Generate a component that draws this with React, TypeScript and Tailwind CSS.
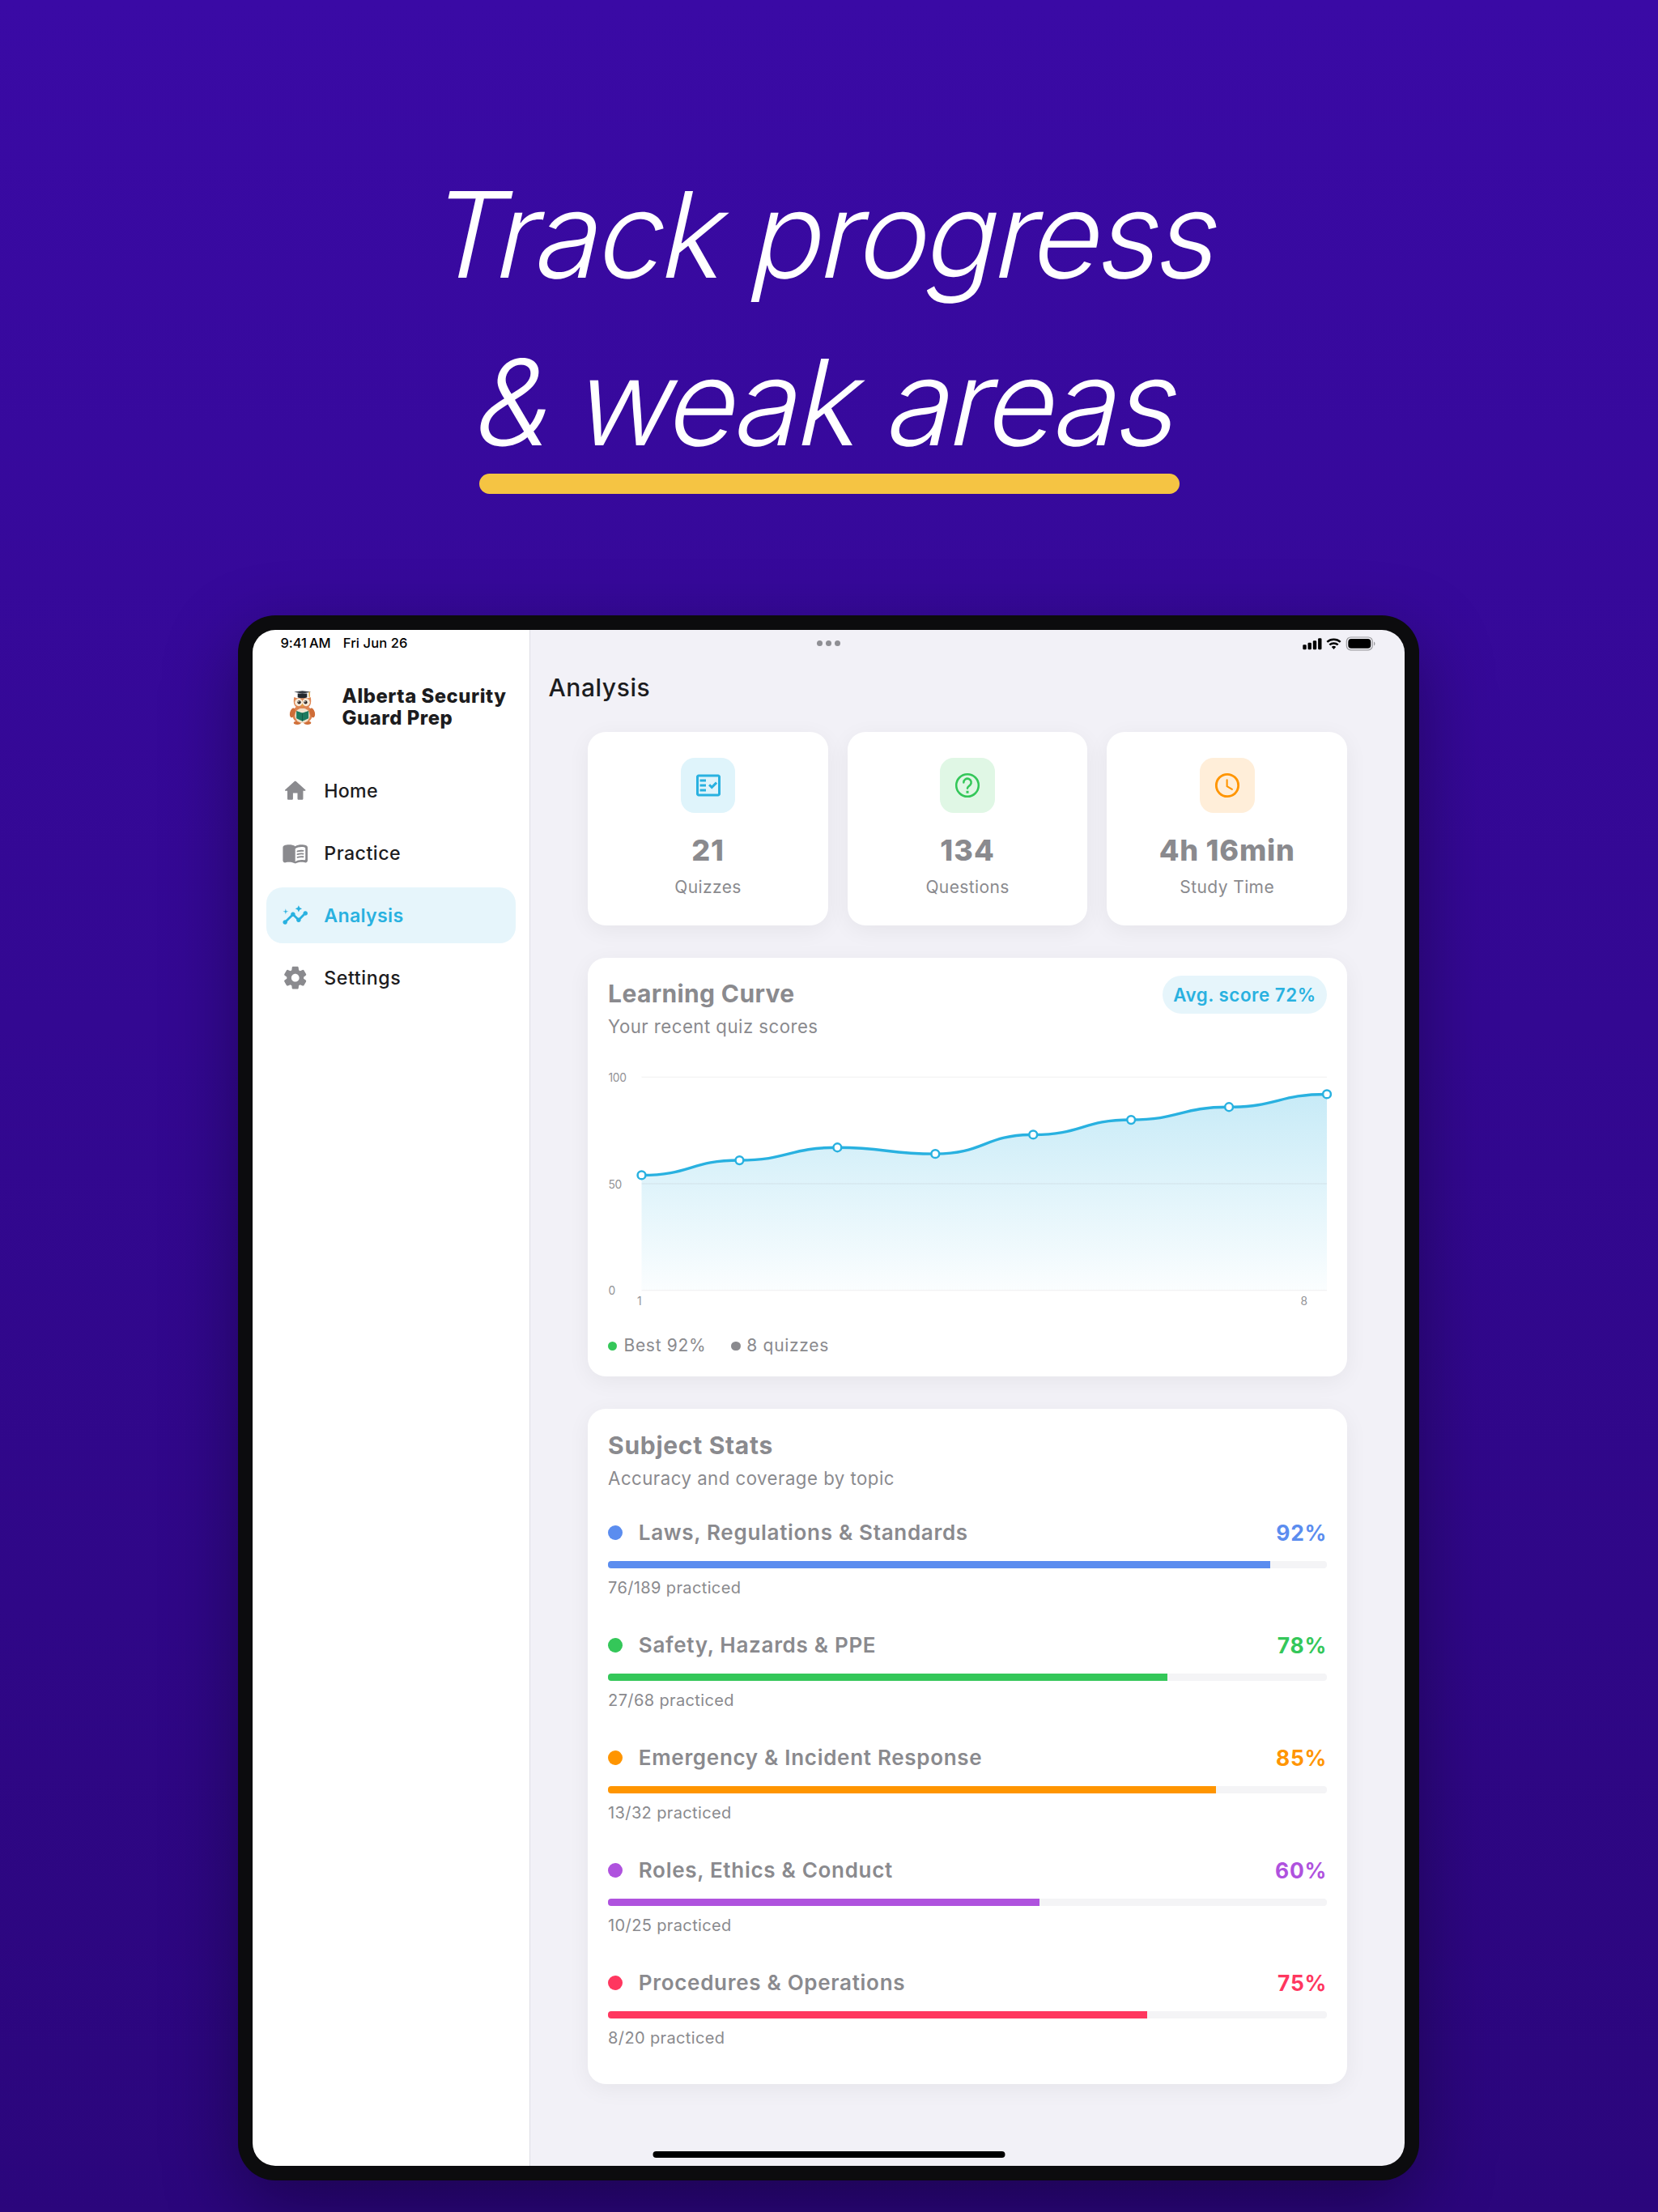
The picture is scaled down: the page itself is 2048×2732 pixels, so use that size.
import { MdInsights, MdOutlineFactCheck } from "react-icons/md";

const ROUNDED_HOME =
  "M10 19v-5h4v5c0 .55.45 1 1 1h3c.55 0 1-.45 1-1v-7h1.7c.46 0 .68-.57.33-.87L12.67 3.6c-.38-.34-.96-.34-1.34 0l-8.36 7.53c-.34.3-.13.87.33.87H5v7c0 .55.45 1 1 1h3c.55 0 1-.45 1-1z";
const ROUNDED_BOOK =
  "M17.5 4.5c-1.95 0-4.05.4-5.5 1.5-1.45-1.1-3.55-1.5-5.5-1.5-1.45 0-2.99.22-4.28.79C1.49 5.62 1 6.33 1 7.14v11.28c0 1.3 1.22 2.26 2.48 1.94.98-.25 2.02-.36 3.02-.36 1.56 0 3.22.26 4.56.92.6.3 1.28.3 1.87 0 1.34-.67 3-.92 4.56-.92 1 0 2.04.11 3.02.36 1.26.33 2.48-.63 2.48-1.94V7.14c0-.81-.49-1.52-1.22-1.85-1.28-.57-2.82-.79-4.27-.79zM21 17.23c0 .63-.58 1.09-1.2.98-.75-.14-1.53-.2-2.3-.2-1.7 0-4.15.65-5.5 1.5V8c1.35-.85 3.8-1.5 5.5-1.5.92 0 1.83.09 2.7.28.46.1.8.51.8.98v9.47z";
const ROUNDED_GEAR =
  "M19.5 12c0-.23-.01-.45-.03-.68l1.86-1.41c.4-.3.51-.86.26-1.3l-1.87-3.23c-.25-.44-.79-.62-1.25-.42l-2.15.91c-.37-.26-.76-.49-1.17-.68l-.29-2.31C14.8 2.38 14.37 2 13.87 2h-3.73c-.51 0-.94.38-1 .88l-.29 2.31c-.41.19-.8.42-1.17.68l-2.15-.91c-.46-.2-1-.02-1.25.42L2.41 8.62c-.25.44-.14.99.26 1.3l1.86 1.41C4.51 11.55 4.5 11.77 4.5 12s.01.45.03.68l-1.86 1.41c-.4.3-.51.86-.26 1.3l1.87 3.23c.25.44.79.62 1.25.42l2.15-.91c.37.26.76.49 1.17.68l.29 2.31c.06.5.49.88.99.88h3.73c.5 0 .93-.38.99-.88l.29-2.31c.41-.19.8-.42 1.17-.68l2.15.91c.46.2 1 .02 1.25-.42l1.87-3.23c.25-.44.14-.99-.26-1.3l-1.86-1.41c.03-.23.04-.45.04-.68zm-7.46 3.5c-1.93 0-3.5-1.57-3.5-3.5s1.57-3.5 3.5-3.5 3.5 1.57 3.5 3.5-1.57 3.5-3.5 3.5z";

function HomeIcon() {
  return (
    <svg viewBox="0 0 24 24" className="size-[33.4px] fill-[#8a8a8e]">
      <path d={ROUNDED_HOME} />
    </svg>
  );
}

function BookIcon() {
  return (
    <svg viewBox="0 0 24 24" className="size-[33.4px] fill-[#8a8a8e]">
      <path d={ROUNDED_BOOK} />
      <g fill="none" stroke="#8a8a8e" strokeWidth="1.3" strokeLinecap="round">
        <path d="M13.98 10.4c1.5-.48 3.4-.63 5.1-.43" />
        <path d="M13.98 13.05c1.5-.48 3.4-.63 5.1-.43" />
        <path d="M13.98 15.7c1.5-.48 3.4-.63 5.1-.43" />
      </g>
    </svg>
  );
}

function GearIcon() {
  return (
    <svg viewBox="0 0 24 24" className="size-[33.4px] fill-[#8a8a8e]">
      <path d={ROUNDED_GEAR} />
    </svg>
  );
}

function QuestionIcon() {
  return (
    <svg viewBox="0 0 24 24" className="size-[36px]" fill="none" stroke="#34c759" strokeWidth="1.7">
      <circle cx="12" cy="12" r="9.2" />
      <path d="M8.9 9.6a3.1 3.1 0 1 1 5.3 2.1c-1 1-2.2 1.5-2.2 2.7" strokeLinecap="round" />
      <path d="M11 16.5h2v2h-2z" fill="#34c759" stroke="none" />
    </svg>
  );
}

function ClockIcon() {
  return (
    <svg viewBox="0 0 24 24" className="size-[36px]" fill="none" stroke="#ff9500">
      <circle cx="12" cy="12" r="9.1" strokeWidth="1.9" />
      <path d="M11.75 7.6v5.1l4.2 2.5" strokeWidth="1.4" strokeLinecap="round" />
    </svg>
  );
}

function Owl() {
  return (
    <svg viewBox="0 0 34 44" className="mt-[2px] h-[44px] w-[33px]">
      <ellipse cx="10.5" cy="41.4" rx="4.6" ry="2.2" fill="#d0703a" />
      <ellipse cx="23.5" cy="41.4" rx="4.6" ry="2.2" fill="#d0703a" />
      <path d="M17 19C7 19 3.5 26 4.6 33c.7 5 5 8.4 12.4 8.4S28.7 38 29.4 33C30.5 26 27 19 17 19z" fill="#dd8450" />
      <ellipse cx="17" cy="32" rx="9.5" ry="9.6" fill="#f1e2cd" />
      <ellipse cx="4.4" cy="28.5" rx="3.2" ry="6.2" fill="#cf6d38" transform="rotate(14 4.4 28.5)" />
      <ellipse cx="29.6" cy="28.5" rx="3.2" ry="6.2" fill="#cf6d38" transform="rotate(-14 29.6 28.5)" />
      <path d="M6.5 8.5 10 10h14l3.5-1.5c.8 3 .9 8-.6 10.5-1.9 3.1-5.9 4-9.9 4s-8-.9-9.900-4c-1.500-2.500-1.400-7.500-.6-10.500z" fill="#de8653" />
      <circle cx="12.3" cy="15.3" r="4.9" fill="#f6ead8" />
      <circle cx="21.7" cy="15.3" r="4.9" fill="#f6ead8" />
      <circle cx="12.9" cy="15.2" r="2.2" fill="#2a2320" />
      <circle cx="21.1" cy="15.2" r="2.2" fill="#2a2320" />
      <circle cx="12.3" cy="14.5" r=".7" fill="#fff" />
      <circle cx="20.5" cy="14.5" r=".7" fill="#fff" />
      <path d="m17 17 1.5 1.8L17 21.2l-1.5-2.4z" fill="#e3a33f" />
      <path d="M11 4v4.8c3.3 1.4 8.7 1.4 12 0V4z" fill="#23282e" />
      <path d="M6.3 1.8 17 .5l11 1.3L17 4.2z" fill="#343a42" />
      <path d="M25.9 2.4v5.4" stroke="#d9a441" strokeWidth="1.5" strokeLinecap="round" />
      <path d="m9.4 26 7.6 2.8 7.9-2.8v9.6L17 39.2l-7.6-3.6z" fill="#1e7a5f" />
      <path d="m10.2 25.3 6.8 2.5 7-2.5" fill="none" stroke="#f3ead9" strokeWidth="1" />
      <path d="M17 28.8v10.4" stroke="#125241" strokeWidth=".8" />
    </svg>
  );
}

function StatusIcons() {
  return (
    <svg viewBox="0 0 92 18" className="h-[18px] w-[92px]">
      <rect x="1.3" y="10.2" width="4.4" height="6.1" rx="1.3" />
      <rect x="7.5" y="7.8" width="4.4" height="8.5" rx="1.3" />
      <rect x="13.8" y="5.2" width="4.4" height="11.1" rx="1.3" />
      <rect x="20.1" y="2.2" width="4.4" height="14.1" rx="1.3" />
      <g fill="none" stroke="#000" strokeWidth="2.5">
        <path d="M31.3 6.9a12.2 12.2 0 0 1 16.4 0" />
        <path d="M34.3 10.4a7.8 7.8 0 0 1 10.4 0" />
      </g>
      <path d="m39.5 15.9-2.7-2.8a4 4 0 0 1 5.4 0z" />
      <rect x="55.3" y="1" width="32" height="15.8" rx="5.2" fill="none" stroke="#9b9b9f" strokeWidth="1.2" />
      <rect x="57.3" y="3.1" width="28" height="11.6" rx="3.8" />
      <path d="M89 6.4c1.9.7 1.9 4.3 0 5z" fill="#9b9b9f" />
    </svg>
  );
}

const nav = [
  { label: "Home", icon: <HomeIcon />, tracking: "tracking-[0.28px]" },
  { label: "Practice", icon: <BookIcon />, tracking: "tracking-[0.47px]" },
  { label: "Analysis", icon: <MdInsights className="size-[33.4px]" />, tracking: "tracking-[0.3px]", active: true },
  { label: "Settings", icon: <GearIcon />, tracking: "tracking-[0.58px]" },
];

const stats = [
  {
    value: "21",
    label: "Quizzes",
    tint: "bg-[#dff4fb]",
    icon: <MdOutlineFactCheck className="size-[36px] text-[#29b1e0]" />,
    tracking: "tracking-[1px]",
  },
  { value: "134", label: "Questions", tint: "bg-[#e0f7e5]", icon: <QuestionIcon />, tracking: "tracking-[1.2px]" },
  { value: "4h 16min", label: "Study Time", tint: "bg-[#ffeed9]", icon: <ClockIcon />, tracking: "tracking-[0.8px]" },
];

const subjects = [
  { name: "Laws, Regulations & Standards", pct: 92, fill: 92.1, note: "76/189 practiced", bg: "bg-[#5b8def]", fg: "text-[#5b8def]" },
  { name: "Safety, Hazards & PPE", pct: 78, fill: 77.8, note: "27/68 practiced", bg: "bg-[#34c759]", fg: "text-[#34c759]" },
  { name: "Emergency & Incident Response", pct: 85, fill: 84.6, note: "13/32 practiced", bg: "bg-[#ff9500]", fg: "text-[#ff9500]" },
  { name: "Roles, Ethics & Conduct", pct: 60, fill: 60, note: "10/25 practiced", bg: "bg-[#af52de]", fg: "text-[#af52de]" },
  { name: "Procedures & Operations", pct: 75, fill: 75, note: "8/20 practiced", bg: "bg-[#ff375f]", fg: "text-[#ff375f]" },
];

const scores = [54, 61, 67, 64, 73, 80, 86, 92];

function LearningChart() {
  const left = 41.5;
  const step = 120.93;
  const base = 283.6;
  const points = scores.map((s, i) => ({ x: left + i * step, y: base - s * 2.632 }));
  const curve = points
    .slice(1)
    .map((p, i) => {
      const prev = points[i];
      const mid = (prev.x + p.x) / 2;
      return `C${mid} ${prev.y} ${mid} ${p.y} ${p.x} ${p.y}`;
    })
    .join("");
  const line = `M${points[0].x} ${points[0].y}${curve}`;
  const right = points[points.length - 1].x;

  return (
    <svg viewBox="0 0 888 310" className="mt-[28px] block h-[310px] w-[888px] overflow-visible">
      <defs>
        <linearGradient id="area" x1="0" y1="0" x2="0" y2="1">
          <stop offset="0" stopColor="#29b1e0" stopOpacity="0.26" />
          <stop offset="1" stopColor="#29b1e0" stopOpacity="0.02" />
        </linearGradient>
      </defs>
      <path d={`${line}L${right} ${base}L${left} ${base}Z`} fill="url(#area)" />
      {[20.4, 152, 283.6].map((y) => (
        <path key={y} d={`M${left} ${y}H${right}`} stroke="#8a8a8e" strokeOpacity="0.1" strokeWidth="1.4" />
      ))}
      <path d={line} fill="none" stroke="#29b1e0" strokeWidth="3.4" />
      {points.map((p) => (
        <circle key={p.x} cx={p.x} cy={p.y} r="4.9" fill="#fff" stroke="#29b1e0" strokeWidth="2.5" />
      ))}
      <g fill="#929296" fontSize="13.8" letterSpacing="-0.3">
        <text x="0.5" y="26">100</text>
        <text x="0.5" y="157.5">50</text>
        <text x="0.5" y="289.2">0</text>
        <text x="36" y="301.7">1</text>
        <text x="855.5" y="301.7">8</text>
      </g>
    </svg>
  );
}

function Sidebar() {
  return (
    <aside className="flex w-[343px] shrink-0 flex-col border-r border-[#dedee5] bg-white">
      <div className="flex h-[33px] items-center pl-[34.5px] text-[16.5px] font-medium text-black">
        <span className="tracking-[-0.08px] [word-spacing:-1.2px]">9:41 AM</span>
        <span className="ml-[15.2px] tracking-[0.1px]">Fri Jun 26</span>
      </div>
      <div className="mt-[34.5px] flex items-center pl-[45px]">
        <Owl />
        <div className="ml-[32.5px] text-[23.8px] leading-[27.8px] font-extrabold tracking-[0.57px] whitespace-nowrap text-[#1c1c1e]">
          Alberta Security
          <br />
          Guard Prep
        </div>
      </div>
      <nav className="mt-[41.2px] flex flex-col gap-2 px-[17px]">
        {nav.map((item) => (
          <div
            key={item.label}
            className={`flex h-[69px] items-center gap-[19.3px] rounded-[20px] pl-[18.6px] text-[23.2px] ${item.tracking} ${
              item.active ? "bg-[#e6f5fb] font-semibold text-[#29b1e0]" : "font-medium text-[#1c1c1e]"
            }`}
          >
            {item.icon}
            <span className="pt-[2px]">{item.label}</span>
          </div>
        ))}
      </nav>
    </aside>
  );
}

const card = "rounded-[22px] bg-white shadow-[0_6px_28px_rgba(0,0,0,0.055)]";

function Main() {
  return (
    <main className="flex min-w-0 flex-1 flex-col bg-[#f2f1f7] text-[#8a8a8e]">
      <div className="flex h-[33px] items-center justify-between pr-[35px] pl-[354px]">
        <div className="flex gap-1">
          <span className="size-[7px] rounded-full bg-[#8f8f94]" />
          <span className="size-[7px] rounded-full bg-[#8f8f94]" />
          <span className="size-[7px] rounded-full bg-[#8f8f94]" />
        </div>
        <StatusIcons />
      </div>
      <h2 className="flex h-[76px] items-center pl-[22.5px] text-[30px] font-medium tracking-[0.56px] text-[#1c1c1e]">
        Analysis
      </h2>
      <div className="mt-[17px] ml-[71.3px] w-[937.700px]">
        <section className="grid grid-cols-3 gap-[24px]">
          {stats.map((s) => (
            <div key={s.label} className={`flex h-[238.7px] flex-col items-center pt-8 ${card}`}>
              <div className={`flex size-[67.8px] items-center justify-center rounded-[17px] ${s.tint}`}>{s.icon}</div>
              <div className={`mt-[24px] text-[36px] leading-[44px] font-extrabold ${s.tracking}`}>{s.value}</div>
              <div className="mt-[10px] text-[21px] leading-[28px] tracking-[0.4px]">{s.label}</div>
            </div>
          ))}
        </section>

        <section className={`mt-[40px] h-[517.3px] px-[24.800px] pt-[22px] ${card}`}>
          <div className="flex items-start justify-between">
            <div className="pt-[4.3px]">
              <h3 className="text-[30px] leading-[36px] font-bold tracking-[0.36px]">Learning Curve</h3>
              <p className="mt-[9.4px] text-[22.2px] leading-[28px] tracking-[0.48px]">Your recent quiz scores</p>
            </div>
            <div className="flex h-[47px] w-[203.5px] items-center justify-center rounded-full bg-[#e6f5fb] pt-px text-[22.3px] font-semibold tracking-[0.55px] text-[#29b1e0]">
              Avg. score 72%
            </div>
          </div>
          <LearningChart />
          <div className="mt-[28px] flex items-center text-[21px] leading-[28px] tracking-[0.7px]">
            <span className="size-[11.4px] rounded-full bg-[#34c759]" />
            <span className="ml-[8px]">Best 92%</span>
            <span className="ml-[31px] size-[11.4px] rounded-full bg-[#8a8a8e]" />
            <span className="ml-[7.500px]">8 quizzes</span>
          </div>
        </section>

        <section className={`mt-[40.200px] h-[833.5px] px-[24.800px] pt-[26.8px] ${card}`}>
          <h3 className="text-[30px] leading-[36px] font-bold tracking-[0.7px]">Subject Stats</h3>
          <p className="mt-[9px] text-[22.2px] leading-[28px] tracking-[0.5px]">Accuracy and coverage by topic</p>
          <ul className="mt-[36.7px] flex flex-col gap-[41.7px]">
            {subjects.map((s) => (
              <li key={s.name}>
                <div className="flex h-8 items-center text-[26px] leading-[32px]">
                  <span className={`size-[18px] rounded-full ${s.bg}`} />
                  <span className="ml-[19.7px] pt-px font-semibold tracking-[0.7px]">{s.name}</span>
                  <span className={`ml-auto pt-px text-[26.4px] font-bold tracking-[0.8px] ${s.fg}`}>{s.pct}%</span>
                </div>
                <div className="mt-[19.3px] h-[8.7px] overflow-hidden rounded-[4px] bg-[#f4f4f6]">
                  <div className={`h-full ${s.bg}`} style={{ width: `${s.fill}%` }} />
                </div>
                <p className="mt-[11.3px] text-[20px] leading-[26px] tracking-[0.37px]">{s.note}</p>
              </li>
            ))}
          </ul>
        </section>
      </div>
    </main>
  );
}

export default function App() {
  return (
    <div className="h-[2732px] w-[2048px] overflow-hidden bg-linear-to-b from-[#3a0aa5] to-[#2b067c] font-['Inter',sans-serif]">
      <header className="flex h-[760px] flex-col items-center pt-[185.5px]">
        <h1 className="text-center text-[147px] leading-[207.7px] font-light whitespace-nowrap text-white">
          <span className="block -translate-x-[3px] -skew-x-[12.5deg] tracking-[-3.7px]">Track progress</span>
          <span className="block -skew-x-[12.5deg] tracking-[-3.9px]">&amp; weak areas</span>
        </h1>
        <div className="-mt-[16px] h-[25px] w-[865px] rounded-full bg-[#f5c443]" />
      </header>

      <div className="relative ml-[294px] h-[1933px] w-[1459px] rounded-[46px] bg-[#0c0c0e] p-[18px] shadow-[0_30px_90px_rgba(0,0,0,0.35)]">
        <div className="flex h-full overflow-hidden rounded-[28px]">
          <Sidebar />
          <Main />
        </div>
        <div className="absolute bottom-[28px] left-1/2 h-[8px] w-[435px] -translate-x-1/2 rounded-full bg-black" />
      </div>
    </div>
  );
}
